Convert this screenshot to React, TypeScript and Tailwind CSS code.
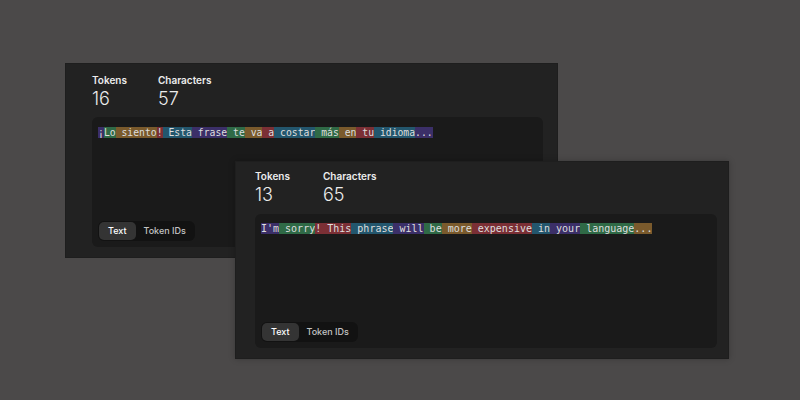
import React from 'react'

type Token = { text: string; color: string }

const palette: Record<string, string> = {
  purple: 'bg-[#3b2f68]',
  green: 'bg-[#2f6a46]',
  orange: 'bg-[#7a5a2c]',
  red: 'bg-[#7b2f35]',
  teal: 'bg-[#23566d]',
}

const spanish: Token[] = [
  { text: '¡', color: 'purple' },
  { text: 'Lo', color: 'green' },
  { text: ' siento', color: 'orange' },
  { text: '!', color: 'red' },
  { text: ' Esta', color: 'teal' },
  { text: ' frase', color: 'purple' },
  { text: ' te', color: 'green' },
  { text: ' va', color: 'orange' },
  { text: ' a', color: 'red' },
  { text: ' costar', color: 'teal' },
  { text: ' más', color: 'green' },
  { text: ' en', color: 'orange' },
  { text: ' tu', color: 'red' },
  { text: ' idioma', color: 'teal' },
  { text: '...', color: 'purple' },
]

const english: Token[] = [
  { text: "I'm", color: 'purple' },
  { text: ' sorry', color: 'green' },
  { text: '!', color: 'red' },
  { text: ' This', color: 'red' },
  { text: ' phrase', color: 'teal' },
  { text: ' will', color: 'purple' },
  { text: ' be', color: 'green' },
  { text: ' more', color: 'orange' },
  { text: ' expensive', color: 'red' },
  { text: ' in', color: 'teal' },
  { text: ' your', color: 'purple' },
  { text: ' language', color: 'green' },
  { text: '...', color: 'orange' },
]

const Stat = ({ label, value, width }: { label: string; value: string; width: string }) => (
  <div className={width}>
    <div className="text-[10px] leading-[14px] font-semibold text-[#ececec]">{label}</div>
    <div className="mt-px text-[18px] leading-[22px] font-light text-[#ececec]">{value}</div>
  </div>
)

const Tabs = () => (
  <div className="inline-flex self-start rounded-md bg-[#121212] p-px text-[9px] font-medium">
    <div className="rounded-[5px] bg-[#343434] px-[9px] py-[3px] leading-[12px] text-white">Text</div>
    <div className="px-[8px] py-[3px] leading-[12px] text-[#c4c4c4]">Token IDs</div>
  </div>
)

const TokenLine = ({ tokens, size }: { tokens: Token[]; size: string }) => (
  <div className={`whitespace-pre font-['DejaVu_Sans_Mono','Liberation_Mono',monospace] leading-[12px] text-[#dedede] ${size}`}>
    {tokens.map((t, i) => (
      <span key={i} className={palette[t.color]}>
        {t.text}
      </span>
    ))}
  </div>
)

export default function App() {
  return (
    <div className="relative h-[400px] w-[800px] overflow-hidden bg-[#4b4949] font-['Inter','Noto_Sans',sans-serif]">
      {/* back card */}
      <div className="absolute left-[65px] top-[63px] flex h-[195px] w-[493px] flex-col border border-[#1e1e1e] bg-[#222222] pb-[10px] pl-[26px] pr-[14px] pt-[9px]">
        <div className="flex">
          <Stat label="Tokens" value="16" width="w-[66px]" />
          <Stat label="Characters" value="57" width="w-[80px]" />
        </div>
        <div className="mt-[7px] flex flex-1 flex-col justify-between rounded-md bg-[#1a1a1a] px-[6px] pb-[6px] pt-[10px]">
          <TokenLine tokens={spanish} size="text-[9.75px]" />
          <Tabs />
        </div>
      </div>

      {/* front card */}
      <div className="absolute left-[235px] top-[161px] flex h-[198px] w-[494px] flex-col border border-[#1e1e1e] bg-[#222222] pb-[10px] pl-[19px] pr-[11px] pt-[7px] shadow-[0_0_6px_rgba(0,0,0,0.25)]">
        <div className="flex">
          <Stat label="Tokens" value="13" width="w-[68px]" />
          <Stat label="Characters" value="65" width="w-[80px]" />
        </div>
        <div className="mt-[8px] flex flex-1 flex-col justify-between rounded-md bg-[#1a1a1a] px-[6px] pb-[6px] pt-[9px]">
          <TokenLine tokens={english} size="text-[10px]" />
          <Tabs />
        </div>
      </div>
    </div>
  )
}
